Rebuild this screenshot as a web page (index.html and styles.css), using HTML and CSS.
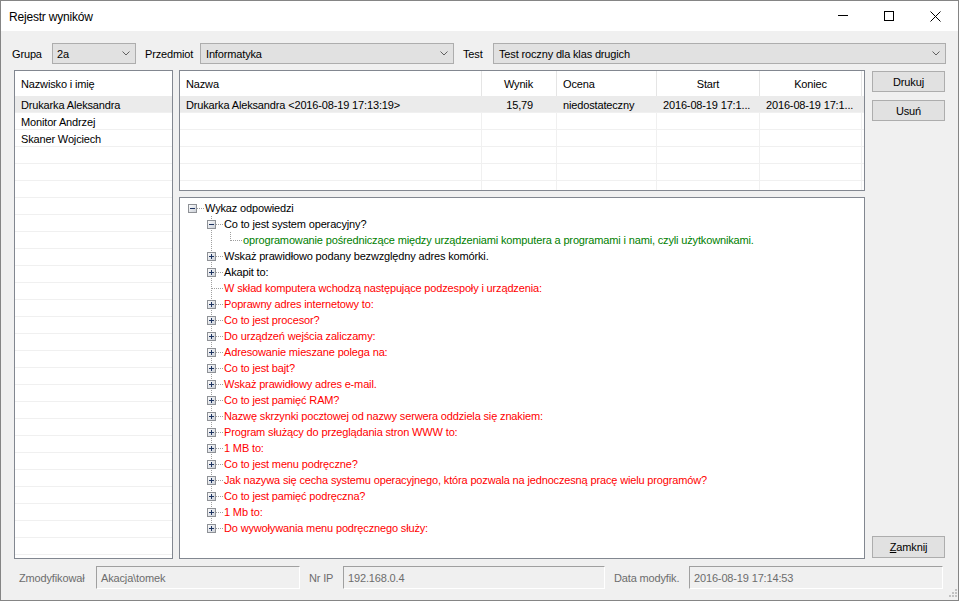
FILE: index.html
```html
<!DOCTYPE html>
<html lang="pl">
<head>
<meta charset="utf-8">
<title>Rejestr wyników</title>
<link rel="stylesheet" href="styles.css">
</head>
<body>
<svg class="defs" width="0" height="0" aria-hidden="true">
  <defs>
    <linearGradient id="tbg" x1="0" y1="0" x2="1" y2="1">
      <stop offset="0" stop-color="#ffffff"/>
      <stop offset="1" stop-color="#c9ced6"/>
    </linearGradient>
    <symbol id="t-minus-root" viewBox="0 0 19 16">
      <g shape-rendering="crispEdges">
        <line x1="11" y1="8.5" x2="19" y2="8.5" stroke="#a0a0a0" stroke-dasharray="1 1"/>
        <rect x="2.5" y="4.5" width="8" height="8" fill="url(#tbg)" stroke="#8e9196"/>
        <line x1="4" y1="8.5" x2="9" y2="8.5" stroke="#1e3461"/>
      </g>
    </symbol>
    <symbol id="t-minus-tee" viewBox="0 0 19 16">
      <g shape-rendering="crispEdges">
        <line x1="6.5" y1="0" x2="6.5" y2="16" stroke="#a0a0a0" stroke-dasharray="1 1"/>
        <line x1="11" y1="8.5" x2="19" y2="8.5" stroke="#a0a0a0" stroke-dasharray="1 1"/>
        <rect x="2.5" y="4.5" width="8" height="8" fill="url(#tbg)" stroke="#8e9196"/>
        <line x1="4" y1="8.5" x2="9" y2="8.5" stroke="#1e3461"/>
      </g>
    </symbol>
    <symbol id="t-plus-tee" viewBox="0 0 19 16">
      <g shape-rendering="crispEdges">
        <line x1="6.5" y1="0" x2="6.5" y2="16" stroke="#a0a0a0" stroke-dasharray="1 1"/>
        <line x1="11" y1="8.5" x2="19" y2="8.5" stroke="#a0a0a0" stroke-dasharray="1 1"/>
        <rect x="2.5" y="4.5" width="8" height="8" fill="url(#tbg)" stroke="#8e9196"/>
        <line x1="4" y1="8.5" x2="9" y2="8.5" stroke="#1e3461"/>
        <line x1="6.5" y1="6" x2="6.5" y2="11" stroke="#1e3461"/>
      </g>
    </symbol>
    <symbol id="t-plus-last" viewBox="0 0 19 16">
      <g shape-rendering="crispEdges">
        <line x1="6.5" y1="0" x2="6.5" y2="5" stroke="#a0a0a0" stroke-dasharray="1 1"/>
        <line x1="11" y1="8.5" x2="19" y2="8.5" stroke="#a0a0a0" stroke-dasharray="1 1"/>
        <rect x="2.5" y="4.5" width="8" height="8" fill="url(#tbg)" stroke="#8e9196"/>
        <line x1="4" y1="8.5" x2="9" y2="8.5" stroke="#1e3461"/>
        <line x1="6.5" y1="6" x2="6.5" y2="11" stroke="#1e3461"/>
      </g>
    </symbol>
    <symbol id="t-leaf-tee" viewBox="0 0 19 16">
      <g shape-rendering="crispEdges">
        <line x1="6.5" y1="0" x2="6.5" y2="16" stroke="#a0a0a0" stroke-dasharray="1 1"/>
        <line x1="7" y1="8.5" x2="19" y2="8.5" stroke="#a0a0a0" stroke-dasharray="1 1"/>
      </g>
    </symbol>
    <symbol id="t-leaf-last" viewBox="0 0 19 16">
      <g shape-rendering="crispEdges">
        <line x1="6.5" y1="0" x2="6.5" y2="9" stroke="#a0a0a0" stroke-dasharray="1 1"/>
        <line x1="7" y1="8.5" x2="19" y2="8.5" stroke="#a0a0a0" stroke-dasharray="1 1"/>
      </g>
    </symbol>
    <symbol id="t-pass" viewBox="0 0 19 16">
      <g shape-rendering="crispEdges">
        <line x1="6.5" y1="0" x2="6.5" y2="16" stroke="#a0a0a0" stroke-dasharray="1 1"/>
      </g>
    </symbol>
    <symbol id="chev" viewBox="0 0 8 5">
      <polyline points="0.5,0.5 4,4 7.5,0.5" fill="none" stroke="#606060" stroke-width="1"/>
    </symbol>
  </defs>
</svg>

<div class="window">
  <div class="titlebar">
    <span class="title">Rejestr wyników</span>
    <div class="caption">
      <span class="cbtn"><svg width="10" height="10" viewBox="0 0 10 10"><line x1="0" y1="4.5" x2="10" y2="4.5" stroke="#000" shape-rendering="crispEdges"/></svg></span>
      <span class="cbtn"><svg width="10" height="10" viewBox="0 0 10 10"><rect x="0.5" y="0.5" width="9" height="9" fill="none" stroke="#000" shape-rendering="crispEdges"/></svg></span>
      <span class="cbtn"><svg width="11" height="11" viewBox="0 0 11 11"><path d="M0.5 0.5 L10.5 10.5 M10.5 0.5 L0.5 10.5" stroke="#000" stroke-width="1"/></svg></span>
    </div>
  </div>

  <div class="toolbar">
    <span class="lbl lbl-grupa">Grupa</span>
    <div class="combo combo-grupa"><span>2a</span><svg class="chev"><use href="#chev"/></svg></div>
    <span class="lbl lbl-przedmiot">Przedmiot</span>
    <div class="combo combo-przedmiot"><span>Informatyka</span><svg class="chev"><use href="#chev"/></svg></div>
    <span class="lbl lbl-test">Test</span>
    <div class="combo combo-test"><span>Test roczny dla klas drugich</span><svg class="chev"><use href="#chev"/></svg></div>
  </div>

  <div class="main">
    <div class="list">
      <div class="list-head">Nazwisko i imię</div>
      <div class="list-body">
        <div class="list-row selected">Drukarka Aleksandra</div>
        <div class="list-row">Monitor Andrzej</div>
        <div class="list-row">Skaner Wojciech</div>
      </div>
    </div>

    <div class="center">
      <div class="grid">
        <div class="grid-head">
          <div class="cell c1">Nazwa</div>
          <div class="cell c2 right">Wynik</div>
          <div class="cell c3">Ocena</div>
          <div class="cell c4 mid">Start</div>
          <div class="cell c5 mid">Koniec</div>
        </div>
        <div class="grid-body">
          <div class="grid-row selected">
            <div class="cell c1">Drukarka Aleksandra &lt;2016-08-19 17:13:19&gt;</div>
            <div class="cell c2 right">15,79</div>
            <div class="cell c3">niedostateczny</div>
            <div class="cell c4">2016-08-19 17:1...</div>
            <div class="cell c5">2016-08-19 17:1...</div>
          </div>
          <div class="grid-row"><div class="cell c1"></div><div class="cell c2"></div><div class="cell c3"></div><div class="cell c4"></div><div class="cell c5"></div></div>
          <div class="grid-row"><div class="cell c1"></div><div class="cell c2"></div><div class="cell c3"></div><div class="cell c4"></div><div class="cell c5"></div></div>
          <div class="grid-row"><div class="cell c1"></div><div class="cell c2"></div><div class="cell c3"></div><div class="cell c4"></div><div class="cell c5"></div></div>
          <div class="grid-row"><div class="cell c1"></div><div class="cell c2"></div><div class="cell c3"></div><div class="cell c4"></div><div class="cell c5"></div></div>
          <div class="grid-row"><div class="cell c1"></div><div class="cell c2"></div><div class="cell c3"></div><div class="cell c4"></div><div class="cell c5"></div></div>
        </div>
      </div>

      <div class="tree">
        <div class="node"><svg class="g"><use href="#t-minus-root"/></svg><span class="txt">Wykaz odpowiedzi</span></div>
        <div class="node"><span class="ind"></span><svg class="g"><use href="#t-minus-tee"/></svg><span class="txt">Co to jest system operacyjny?</span></div>
        <div class="node green"><span class="ind"></span><svg class="g"><use href="#t-pass"/></svg><svg class="g"><use href="#t-leaf-last"/></svg><span class="txt">oprogramowanie pośredniczące między urządzeniami komputera a programami i nami, czyli użytkownikami.</span></div>
        <div class="node"><span class="ind"></span><svg class="g"><use href="#t-plus-tee"/></svg><span class="txt">Wskaż prawidłowo podany bezwzględny adres komórki.</span></div>
        <div class="node"><span class="ind"></span><svg class="g"><use href="#t-plus-tee"/></svg><span class="txt">Akapit to:</span></div>
        <div class="node red"><span class="ind"></span><svg class="g"><use href="#t-leaf-tee"/></svg><span class="txt">W skład komputera wchodzą następujące podzespoły i urządzenia:</span></div>
        <div class="node red"><span class="ind"></span><svg class="g"><use href="#t-plus-tee"/></svg><span class="txt">Poprawny adres internetowy to:</span></div>
        <div class="node red"><span class="ind"></span><svg class="g"><use href="#t-plus-tee"/></svg><span class="txt">Co to jest procesor?</span></div>
        <div class="node red"><span class="ind"></span><svg class="g"><use href="#t-plus-tee"/></svg><span class="txt">Do urządzeń wejścia zaliczamy:</span></div>
        <div class="node red"><span class="ind"></span><svg class="g"><use href="#t-plus-tee"/></svg><span class="txt">Adresowanie mieszane polega na:</span></div>
        <div class="node red"><span class="ind"></span><svg class="g"><use href="#t-plus-tee"/></svg><span class="txt">Co to jest bajt?</span></div>
        <div class="node red"><span class="ind"></span><svg class="g"><use href="#t-plus-tee"/></svg><span class="txt">Wskaż prawidłowy adres e-mail.</span></div>
        <div class="node red"><span class="ind"></span><svg class="g"><use href="#t-plus-tee"/></svg><span class="txt">Co to jest pamięć RAM?</span></div>
        <div class="node red"><span class="ind"></span><svg class="g"><use href="#t-plus-tee"/></svg><span class="txt">Nazwę skrzynki pocztowej od nazwy serwera oddziela się znakiem:</span></div>
        <div class="node red"><span class="ind"></span><svg class="g"><use href="#t-plus-tee"/></svg><span class="txt">Program służący do przeglądania stron WWW to:</span></div>
        <div class="node red"><span class="ind"></span><svg class="g"><use href="#t-plus-tee"/></svg><span class="txt">1 MB to:</span></div>
        <div class="node red"><span class="ind"></span><svg class="g"><use href="#t-plus-tee"/></svg><span class="txt">Co to jest menu podręczne?</span></div>
        <div class="node red"><span class="ind"></span><svg class="g"><use href="#t-plus-tee"/></svg><span class="txt">Jak nazywa się cecha systemu operacyjnego, która pozwala na jednoczesną pracę wielu programów?</span></div>
        <div class="node red"><span class="ind"></span><svg class="g"><use href="#t-plus-tee"/></svg><span class="txt">Co to jest pamięć podręczna?</span></div>
        <div class="node red"><span class="ind"></span><svg class="g"><use href="#t-plus-tee"/></svg><span class="txt">1 Mb to:</span></div>
        <div class="node red"><span class="ind"></span><svg class="g"><use href="#t-plus-last"/></svg><span class="txt">Do wywoływania menu podręcznego służy:</span></div>
      </div>
    </div>

    <div class="buttons">
      <div class="btn btn-drukuj">Drukuj</div>
      <div class="btn btn-usun">Usuń</div>
      <div class="btn btn-zamknij"><u>Z</u>amknij</div>
    </div>
  </div>

  <div class="status">
    <span class="slbl slbl-mod">Zmodyfikował</span>
    <div class="tb tb-mod">Akacja\tomek</div>
    <span class="slbl slbl-ip">Nr IP</span>
    <div class="tb tb-ip">192.168.0.4</div>
    <span class="slbl slbl-data">Data modyfik.</span>
    <div class="tb tb-data">2016-08-19 17:14:53</div>
  </div>

  <svg class="grip" width="12" height="12" viewBox="0 0 12 12" aria-hidden="true">
    <g fill="#c2c2c2" shape-rendering="crispEdges">
      <rect x="9" y="1" width="2" height="2"/>
      <rect x="6" y="4" width="2" height="2"/>
      <rect x="9" y="4" width="2" height="2"/>
      <rect x="3" y="7" width="2" height="2"/>
      <rect x="6" y="7" width="2" height="2"/>
      <rect x="9" y="7" width="2" height="2"/>
    </g>
  </svg>
</div>
</body>
</html>
```

FILE: styles.css
```css
* {
  box-sizing: border-box;
}

html,
body {
  margin: 0;
  padding: 0;
}

body {
  width: 959px;
  height: 601px;
  overflow: hidden;
  background: #f0f0f0;
  font-family: "Liberation Sans", Arial, sans-serif;
  font-size: 11px;
  letter-spacing: -0.15px;
  color: #000;
}

.defs {
  display: block;
  width: 0;
  height: 0;
  overflow: hidden;
}

.window {
  position: relative;
  width: 959px;
  height: 601px;
  border: 1px solid #858585;
  background: #f0f0f0;
  display: flex;
  flex-direction: column;
}

/* ---------- title bar ---------- */
.titlebar {
  height: 30px;
  flex: none;
  background: #fff;
  display: flex;
  align-items: center;
}

.title {
  padding-left: 8px;
  font-size: 12px;
  letter-spacing: -0.2px;
  padding-top: 1px;
}

.caption {
  margin-left: auto;
  display: flex;
  height: 30px;
}

.cbtn {
  width: 46px;
  height: 30px;
  display: flex;
  align-items: center;
  justify-content: center;
}

.cbtn svg {
  display: block;
}

/* ---------- toolbar ---------- */
.toolbar {
  flex: none;
  display: flex;
  align-items: center;
  height: 21px;
  margin-top: 12px;
  padding-left: 11px;
}

.lbl {
  flex: none;
  white-space: nowrap;
}

.lbl-grupa { width: 40px; }
.lbl-przedmiot { width: 55px; }
.lbl-test { width: 30px; }

.combo {
  flex: none;
  height: 21px;
  border: 1px solid #adadad;
  background: #e1e1e1;
  display: flex;
  align-items: center;
  justify-content: space-between;
  padding: 0 5px 0 4px;
  white-space: nowrap;
}

.combo-grupa { width: 84px; margin-right: 9px; }
.combo-przedmiot { width: 254px; margin-right: 9px; padding-left: 5px; }
.combo-test { width: 453px; padding-left: 5px; }

.chev {
  width: 8px;
  height: 5px;
  flex: none;
  display: block;
}

/* ---------- main area ---------- */
.main {
  flex: none;
  height: 489px;
  margin-top: 6px;
  padding-left: 13px;
  display: flex;
}

.list {
  flex: none;
  width: 159px;
  height: 489px;
  border: 1px solid #828790;
  background: #fff;
  display: flex;
  flex-direction: column;
}

.list-head {
  height: 25px;
  flex: none;
  display: flex;
  align-items: center;
  padding-left: 6px;
  padding-top: 1px;
}

.list-body {
  flex: 1;
  background: repeating-linear-gradient(to bottom, #fff 0, #fff 16px, #f0f0f0 16px, #f0f0f0 17px);
}

.list-row {
  height: 17px;
  display: flex;
  align-items: center;
  padding-left: 6px;
  padding-top: 1px;
  border-bottom: 1px solid #f0f0f0;
  white-space: nowrap;
}

.selected {
  background: #ebebeb;
}

.center {
  flex: none;
  width: 686px;
  margin-left: 6px;
  display: flex;
  flex-direction: column;
}

/* ---------- grid ---------- */
.grid {
  height: 121px;
  flex: none;
  border: 1px solid #828790;
  background: #fff;
  overflow: hidden;
  display: flex;
  flex-direction: column;
}

.grid-head {
  height: 25px;
  flex: none;
  display: flex;
}

.grid-head .cell {
  border-right: 1px solid #e5e5e5;
  padding-top: 1px;
}

.grid-body {
  flex: 1;
  overflow: hidden;
}

.grid-row {
  height: 17px;
  display: flex;
  border-bottom: 1px solid #f0f0f0;
}

.grid-row .cell {
  border-right: 1px solid #f0f0f0;
  padding-top: 1px;
}

.grid-row.selected .cell {
  border-right-color: #ebebeb;
}

.cell {
  flex: none;
  height: 100%;
  display: flex;
  align-items: center;
  padding-left: 6px;
  white-space: nowrap;
  overflow: hidden;
}

.cell.right {
  justify-content: flex-end;
  padding-left: 0;
  padding-right: 23px;
}

.cell.mid {
  justify-content: center;
  padding-left: 0;
}

.c1 { width: 302px; }
.c2 { width: 75px; }
.c3 { width: 100px; }
.c4 { width: 103px; }
.c5 { width: 102px; }

/* ---------- tree ---------- */
.tree {
  height: 362px;
  flex: none;
  margin-top: 6px;
  border: 1px solid #828790;
  background: #fff;
  padding: 2px 0 0 6px;
  overflow: hidden;
}

.node {
  height: 16px;
  display: flex;
  align-items: center;
  white-space: nowrap;
}

.node.red { color: #ff0000; }
.node.green { color: #008000; }

.ind {
  width: 19px;
  flex: none;
}

.g {
  width: 19px;
  height: 16px;
  flex: none;
  display: block;
}

.txt {
  padding-left: 0;
}

/* ---------- buttons ---------- */
.buttons {
  flex: none;
  width: 73px;
  margin-left: 7px;
  display: flex;
  flex-direction: column;
}

.btn {
  flex: none;
  height: 21px;
  border: 1px solid #adadad;
  background: #e1e1e1;
  display: flex;
  align-items: center;
  justify-content: center;
}

.btn-drukuj { margin-top: 1px; }
.btn-usun { margin-top: 8px; }
.btn-zamknij { margin-top: auto; margin-bottom: 1px; height: 22px; }

/* ---------- status ---------- */
.status {
  flex: none;
  display: flex;
  align-items: center;
  height: 23px;
  margin-top: 7px;
  padding-left: 18px;
  color: #6d6d6d;
}

.slbl {
  flex: none;
  white-space: nowrap;
}

.slbl-mod { width: 77px; }
.slbl-ip { width: 34px; }
.slbl-data { width: 75px; }

.tb {
  flex: none;
  height: 23px;
  border-top: 1px solid #a0a0a0;
  border-left: 1px solid #a0a0a0;
  border-right: 1px solid #fff;
  border-bottom: 1px solid #fff;
  background: #f0f0f0;
  display: flex;
  align-items: center;
  padding-left: 4px;
  white-space: nowrap;
}

.tb-mod { width: 204px; margin-right: 9px; }
.tb-ip { width: 262px; margin-right: 9px; }
.tb-data { width: 254px; }

.grip {
  position: absolute;
  right: 0;
  bottom: 0;
  display: block;
}
```
